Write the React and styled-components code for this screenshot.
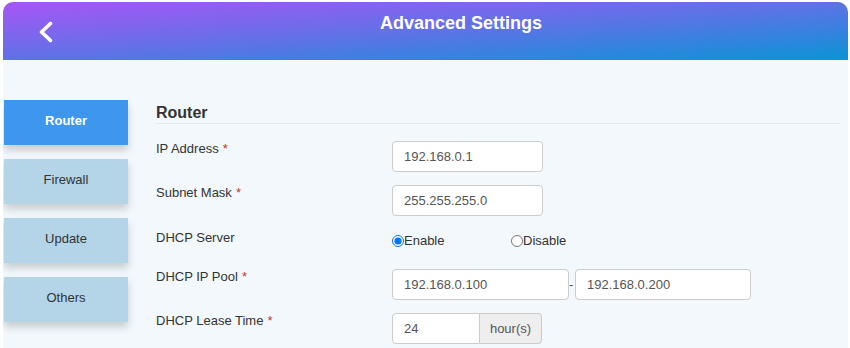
import React from "react";
import styled, { createGlobalStyle } from "styled-components";

const Global = createGlobalStyle`
  html, body { margin: 0; padding: 0; background: #ffffff; }
  body { font-family: "Liberation Sans", Arial, sans-serif; }
  * { box-sizing: border-box; }
`;

const Card = styled.div`
  margin: 2px 0 0 3px;
  width: 845px;
  height: 360px;
  background: #f2f8fc;
  border-radius: 10px 10px 0 0;
  overflow: hidden;
`;

const Header = styled.header`
  height: 58px;
  display: flex;
  align-items: flex-start;
  background: linear-gradient(to bottom right, #a855f7 0%, #5f72e6 50%, #0a94d6 100%);
  color: #fff;
`;

const Back = styled.button`
  width: 71px;
  height: 60px;
  border: 0;
  background: transparent;
  padding: 0 0 0 35px;
  display: flex;
  align-items: center;
  cursor: pointer;
`;

const Title = styled.h1`
  flex: 1;
  margin: 0;
  padding-top: 11px;
  text-align: center;
  font-size: 18px;
  font-weight: 700;
  line-height: 21px;
`;

const Body = styled.div`
  display: flex;
  padding-top: 40px;
`;

const Sidebar = styled.nav`
  width: 124px;
  margin-left: 1px;
  display: flex;
  flex-direction: column;
  gap: 14.5px;
`;

const NavItem = styled.div`
  height: 44.5px;
  padding-bottom: 3px;
  display: flex;
  align-items: center;
  justify-content: center;
  font-size: 13px;
  font-weight: ${(p) => (p.$active ? 700 : 400)};
  color: ${(p) => (p.$active ? "#ffffff" : "#333333")};
  background: ${(p) => (p.$active ? "#3e97ec" : "#b4d4e8")};
  box-shadow: 0 5px 8px rgba(0, 0, 0, 0.18);
`;

const Content = styled.section`
  margin-left: 28px;
  width: 684px;
`;

const SectionTitle = styled.h2`
  margin: 0;
  font-size: 16px;
  font-weight: 700;
  color: #333;
  line-height: 20px;
  padding-top: 3px;
  padding-bottom: 0;
  border-bottom: 1px solid #e3e8ec;
`;

const Form = styled.div`
  margin-top: 17px;
  display: flex;
  flex-direction: column;
  gap: 13px;
`;

const Row = styled.div`
  display: grid;
  grid-template-columns: 236px 1fr;
  align-items: start;
  min-height: ${(p) => p.$h || 31}px;
`;

const Label = styled.div`
  font-size: 13px;
  line-height: 16px;
  color: #333;
  padding-top: ${(p) => p.$pt || 0}px;
`;

const Star = styled.span`
  color: #c0392b;
  margin-left: 4px;
`;

const Input = styled.input`
  width: ${(p) => p.$w}px;
  height: 31px;
  border: 1px solid #cccccc;
  border-radius: ${(p) => p.$radius || "4px"};
  background: #fff;
  padding: 0 11px;
  font-family: inherit;
  font-size: 13px;
  color: #555;
  outline: none;
`;

const Pool = styled.div`
  display: flex;
  align-items: center;
`;

const Dash = styled.span`
  width: 6px;
  font-size: 13px;
  color: #555;
  text-align: left;
`;

const Group = styled.div`
  display: flex;
  width: 150px;
  height: 31px;
`;

const Addon = styled.span`
  width: 62px;
  display: flex;
  align-items: center;
  justify-content: center;
  background: #eeeeee;
  border: 1px solid #cccccc;
  border-left: 0;
  border-radius: 0 4px 4px 0;
  font-size: 13px;
  color: #555;
`;

const Radios = styled.div`
  display: flex;
  padding-top: 4px;
`;

const RadioLabel = styled.label`
  width: 119px;
  display: flex;
  align-items: center;
  font-size: 13px;
  color: #333;
`;

const Radio = styled.input`
  margin: 0;
  width: 12px;
  height: 12px;
`;

export default function App() {
  return (
    <>
      <Global />
      <Card>
        <Header>
          <Back aria-label="back">
            <svg width="16" height="22" viewBox="0 0 16 22">
              <path d="M12.5 2.5 L3.5 11 L12.5 19.5" fill="none" stroke="#fff" strokeWidth="3.6" strokeLinecap="round" strokeLinejoin="round" />
            </svg>
          </Back>
          <Title>Advanced Settings</Title>
        </Header>
        <Body>
          <Sidebar>
            <NavItem $active>Router</NavItem>
            <NavItem>Firewall</NavItem>
            <NavItem>Update</NavItem>
            <NavItem>Others</NavItem>
          </Sidebar>
          <Content>
            <SectionTitle>Router</SectionTitle>
            <Form>
              <Row>
                <Label>IP Address<Star>*</Star></Label>
                <Input $w={151} defaultValue="192.168.0.1" />
              </Row>
              <Row>
                <Label>Subnet Mask<Star>*</Star></Label>
                <Input $w={151} defaultValue="255.255.255.0" />
              </Row>
              <Row $h={27}>
                <Label $pt={1}>DHCP Server</Label>
                <Radios>
                  <RadioLabel><Radio type="radio" name="dhcp" defaultChecked />Enable</RadioLabel>
                  <RadioLabel><Radio type="radio" name="dhcp" />Disable</RadioLabel>
                </Radios>
              </Row>
              <Row>
                <Label>DHCP IP Pool<Star>*</Star></Label>
                <Pool>
                  <Input $w={177} defaultValue="192.168.0.100" />
                  <Dash>-</Dash>
                  <Input $w={176} defaultValue="192.168.0.200" />
                </Pool>
              </Row>
              <Row>
                <Label>DHCP Lease Time<Star>*</Star></Label>
                <Group>
                  <Input $w={88} $radius="4px 0 0 4px" defaultValue="24" />
                  <Addon>hour(s)</Addon>
                </Group>
              </Row>
            </Form>
          </Content>
        </Body>
      </Card>
    </>
  );
}
